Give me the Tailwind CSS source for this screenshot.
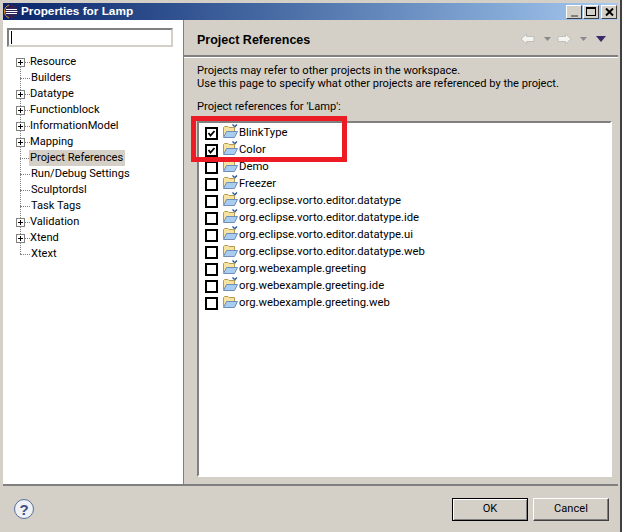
<!DOCTYPE html>
<html lang="en">
  <head>
    <meta charset="UTF-8" />
    <title>Properties for Lamp</title>
    <script src="https://cdn.jsdelivr.net/npm/@tailwindcss/browser@4"></script>
  </head>

  <body class="bg-white overflow-hidden font-['Roboto',sans-serif] text-[11.1px] text-black">
    <svg class="hidden">
      <symbol id="folder" viewBox="0 0 16 16">
        <path d="M1.5 12.5V3.5L2.5 2.5H6L7 3.5H12.5V7" fill="#f7e3a0" stroke="#b59a50" />
        <path d="M1.5 13.5L4.5 7.5H15.5L12.5 13.5Z" fill="#a9cdf0" stroke="#6f8fb8" />
      </symbol>
      <symbol id="project" viewBox="0 0 16 16">
        <use href="#folder" />
        <path d="M10.5 0.5L12.5 2.5M15 0.5L13 2.5M12.5 3H13.5" fill="none" stroke="#1f4f8f" stroke-width="1.2" />
      </symbol>
      <symbol id="plus" viewBox="0 0 9 9">
        <rect x="0.5" y="0.5" width="8" height="8" fill="#fff" stroke="#808080" />
        <path d="M2 4.5H7M4.5 2V7" stroke="#000" />
      </symbol>
      <symbol id="check" viewBox="0 0 13 13">
        <rect x="1" y="1" width="11" height="11" fill="#fff" stroke="#000" stroke-width="2" />
        <path d="M3.5 6L5.5 8.5L9.5 4" fill="none" stroke="#000" stroke-width="1.8" />
      </symbol>
      <symbol id="box" viewBox="0 0 13 13">
        <rect x="1" y="1" width="11" height="11" fill="#fff" stroke="#000" stroke-width="2" />
      </symbol>
    </svg>

    <div class="relative w-[622px] h-[532px] bg-[#d4d0c8] border-r-2 border-[#404040] pl-[3px] pt-[3px] pr-[2px] flex flex-col">
      <!-- Title bar -->
      <div class="h-[17px] flex items-center justify-between bg-gradient-to-r from-[#0a246a] to-[#a6caf0] pl-[1px] pr-[1px] shrink-0">
        <div class="flex items-center gap-[2px]">
          <svg width="15" height="15" viewBox="0 0 15 15">
            <circle cx="7.5" cy="7.5" r="7" fill="#2c2255" />
            <path d="M0.5 7.5A7 7 0 0 1 5 1" fill="none" stroke="#e8973a" />
            <path d="M0.5 7.5A7 7 0 0 0 5 14" fill="none" stroke="#e8973a" />
            <path d="M2 5.5H13M1.5 7.5H13.5M2 9.5H13" stroke="#fff" />
          </svg>
          <span class="font-['Liberation_Sans',sans-serif] font-bold text-[11.8px] text-white leading-none">Properties for Lamp</span>
        </div>
        <div class="flex items-center gap-[1px]">
          <div class="w-[16px] h-[14px] bg-[#d4d0c8] border border-white border-r-[#404040] border-b-[#404040] flex items-end justify-center pb-[1px]">
            <div class="w-[7px] h-[2px] bg-[#808080]"></div>
          </div>
          <div class="w-[16px] h-[14px] bg-[#d4d0c8] border border-white border-r-[#404040] border-b-[#404040] flex items-center justify-center">
            <div class="w-[10px] h-[9px] border border-black border-t-2"></div>
          </div>
          <div class="w-[16px] h-[14px] ml-[1px] bg-[#d4d0c8] border border-white border-r-[#404040] border-b-[#404040] flex items-center justify-center">
            <svg width="9" height="8" viewBox="0 0 9 8"><path d="M1 0.5L8 7.5M8 0.5L1 7.5" stroke="#000" stroke-width="2" /></svg>
          </div>
        </div>
      </div>

      <!-- Dialog body -->
      <div class="flex h-[464px] shrink-0">
        <!-- Left tree -->
        <div class="w-[181px] bg-white shrink-0 pl-[4px] pt-[8px] border-r border-[#808080]">
          <div class="w-[166px] h-[19px] border-2 border-[#808080] border-r-[#d4d0c8] border-b-[#d4d0c8] flex items-center pl-[2px]">
            <div class="w-[1px] h-[13px] bg-black"></div>
          </div>
          <div class="relative mt-[7px] whitespace-nowrap">
            <div class="absolute left-[13px] top-[8px] h-[192px] border-l border-dotted border-[#808080]"></div>
            <ul class="relative">
              <li class="h-[16px] flex items-center pl-[9px]"><svg width="9" height="9"><use href="#plus" /></svg><span class="w-[5px] border-t border-dotted border-[#808080]"></span><span>Resource</span></li>
              <li class="h-[16px] flex items-center pl-[13px]"><span class="w-[10px] border-t border-dotted border-[#808080] mr-[1px]"></span><span>Builders</span></li>
              <li class="h-[16px] flex items-center pl-[9px]"><svg width="9" height="9"><use href="#plus" /></svg><span class="w-[5px] border-t border-dotted border-[#808080]"></span><span>Datatype</span></li>
              <li class="h-[16px] flex items-center pl-[9px]"><svg width="9" height="9"><use href="#plus" /></svg><span class="w-[5px] border-t border-dotted border-[#808080]"></span><span>Functionblock</span></li>
              <li class="h-[16px] flex items-center pl-[9px]"><svg width="9" height="9"><use href="#plus" /></svg><span class="w-[5px] border-t border-dotted border-[#808080]"></span><span>InformationModel</span></li>
              <li class="h-[16px] flex items-center pl-[9px]"><svg width="9" height="9"><use href="#plus" /></svg><span class="w-[5px] border-t border-dotted border-[#808080]"></span><span>Mapping</span></li>
              <li class="h-[16px] flex items-center pl-[13px]"><span class="w-[9px] border-t border-dotted border-[#808080]"></span><span class="bg-[#d4d0c8] pl-[1px] h-[16px] leading-[16px] w-[96px]">Project References</span></li>
              <li class="h-[16px] flex items-center pl-[13px]"><span class="w-[10px] border-t border-dotted border-[#808080] mr-[1px]"></span><span>Run/Debug Settings</span></li>
              <li class="h-[16px] flex items-center pl-[13px]"><span class="w-[10px] border-t border-dotted border-[#808080] mr-[1px]"></span><span>Sculptordsl</span></li>
              <li class="h-[16px] flex items-center pl-[13px]"><span class="w-[10px] border-t border-dotted border-[#808080] mr-[1px]"></span><span>Task Tags</span></li>
              <li class="h-[16px] flex items-center pl-[9px]"><svg width="9" height="9"><use href="#plus" /></svg><span class="w-[5px] border-t border-dotted border-[#808080]"></span><span>Validation</span></li>
              <li class="h-[16px] flex items-center pl-[9px]"><svg width="9" height="9"><use href="#plus" /></svg><span class="w-[5px] border-t border-dotted border-[#808080]"></span><span>Xtend</span></li>
              <li class="h-[16px] flex items-center pl-[13px]"><span class="w-[10px] border-t border-dotted border-[#808080] mr-[1px]"></span><span>Xtext</span></li>
            </ul>
          </div>
        </div>

        <!-- Right page -->
        <div class="flex-1 min-w-0 flex flex-col">
          <div class="h-[37px] shrink-0 flex items-center justify-between pl-[13px] pr-[12px] border-b-2 border-b-[#808080]">
            <span class="font-['Liberation_Sans',sans-serif] font-bold text-[12.5px] mt-[6px]">Project References</span>
            <div class="flex items-center mt-[3px]">
              <svg width="15" height="12" viewBox="0 0 15 12"><path d="M1 6L6.5 1V3.5H14V8.5H6.5V11Z" fill="#f4f4f0" stroke="#c0c0b8" /></svg>
              <svg class="ml-[9px]" width="7" height="4" viewBox="0 0 7 4"><path d="M0 0H7L3.5 4Z" fill="#8a8a8a" /></svg>
              <svg class="ml-[6px]" width="15" height="12" viewBox="0 0 15 12"><path d="M14 6L8.5 1V3.5H1V8.5H8.5V11Z" fill="#f4f4f0" stroke="#c0c0b8" /></svg>
              <svg class="ml-[8px]" width="7" height="4" viewBox="0 0 7 4"><path d="M0 0H7L3.5 4Z" fill="#8a8a8a" /></svg>
              <svg class="ml-[9px]" width="10" height="6" viewBox="0 0 10 6"><path d="M0 0H10L5 6Z" fill="#3a2a6a" /></svg>
            </div>
          </div>
          <div class="border-t border-white pl-[13px] pr-[6px] pt-[6px] flex-1 flex flex-col min-h-0">
            <p class="leading-[13px]">Projects may refer to other projects in the workspace.</p>
            <p class="leading-[13px]">Use this page to specify what other projects are referenced by the project.</p>
            <p class="mt-[10px] leading-[13px]">Project references for 'Lamp':</p>
            <ul class="mt-[8px] h-[356px] border-2 border-[#808080] border-r-white border-b-white bg-white pl-[6px] pt-[2px] w-[415px] text-[11.3px]">
              <li class="h-[17px] flex items-center"><svg width="13" height="13"><use href="#check" /></svg><svg class="ml-[4px] mr-[1px] -mt-[3px]" width="16" height="16"><use href="#project" /></svg><span>BlinkType</span></li>
              <li class="h-[17px] flex items-center"><svg width="13" height="13"><use href="#check" /></svg><svg class="ml-[4px] mr-[1px] -mt-[3px]" width="16" height="16"><use href="#project" /></svg><span>Color</span></li>
              <li class="h-[17px] flex items-center"><svg width="13" height="13"><use href="#box" /></svg><svg class="ml-[4px] mr-[1px] -mt-[3px]" width="16" height="16"><use href="#project" /></svg><span>Demo</span></li>
              <li class="h-[17px] flex items-center"><svg width="13" height="13"><use href="#box" /></svg><svg class="ml-[4px] mr-[1px] -mt-[3px]" width="16" height="16"><use href="#project" /></svg><span>Freezer</span></li>
              <li class="h-[17px] flex items-center"><svg width="13" height="13"><use href="#box" /></svg><svg class="ml-[4px] mr-[1px] -mt-[3px]" width="16" height="16"><use href="#project" /></svg><span>org.eclipse.vorto.editor.datatype</span></li>
              <li class="h-[17px] flex items-center"><svg width="13" height="13"><use href="#box" /></svg><svg class="ml-[4px] mr-[1px] -mt-[3px]" width="16" height="16"><use href="#project" /></svg><span>org.eclipse.vorto.editor.datatype.ide</span></li>
              <li class="h-[17px] flex items-center"><svg width="13" height="13"><use href="#box" /></svg><svg class="ml-[4px] mr-[1px] -mt-[3px]" width="16" height="16"><use href="#project" /></svg><span>org.eclipse.vorto.editor.datatype.ui</span></li>
              <li class="h-[17px] flex items-center"><svg width="13" height="13"><use href="#box" /></svg><svg class="ml-[4px] mr-[1px] -mt-[3px]" width="16" height="16"><use href="#folder" /></svg><span>org.eclipse.vorto.editor.datatype.web</span></li>
              <li class="h-[17px] flex items-center"><svg width="13" height="13"><use href="#box" /></svg><svg class="ml-[4px] mr-[1px] -mt-[3px]" width="16" height="16"><use href="#project" /></svg><span>org.webexample.greeting</span></li>
              <li class="h-[17px] flex items-center"><svg width="13" height="13"><use href="#box" /></svg><svg class="ml-[4px] mr-[1px] -mt-[3px]" width="16" height="16"><use href="#project" /></svg><span>org.webexample.greeting.ide</span></li>
              <li class="h-[17px] flex items-center"><svg width="13" height="13"><use href="#box" /></svg><svg class="ml-[4px] mr-[1px] -mt-[3px]" width="16" height="16"><use href="#folder" /></svg><span>org.webexample.greeting.web</span></li>
            </ul>
          </div>
        </div>
      </div>

      <!-- Footer -->
      <div class="border-t-2 border-t-[#808080] flex-1 flex items-start justify-between pl-[11px] pr-[9px] pt-[12px]">
        <svg class="mt-[1px]" width="20" height="20" viewBox="0 0 20 20">
          <circle cx="10" cy="10" r="9.5" fill="#eef1f6" stroke="#5a6f9a" />
          <text x="10" y="15.5" text-anchor="middle" font-family="Liberation Sans" font-weight="700" font-size="15" fill="#3f5080">?</text>
        </svg>
        <div class="flex gap-[5px]">
          <button class="w-[76px] h-[23px] bg-[#d4d0c8] border border-black shadow-[inset_1px_1px_0_#fff,inset_-1px_-1px_0_#808080]">OK</button>
          <button class="w-[76px] h-[23px] bg-[#d4d0c8] border border-white border-r-[#404040] border-b-[#404040] shadow-[inset_-1px_-1px_0_#808080]">Cancel</button>
        </div>
      </div>

      <!-- Red annotation -->
      <div class="absolute left-[191px] top-[116px] w-[156px] h-[46px] border-[5px] border-[#ed1c24]"></div>
    </div>
  </body>
</html>
